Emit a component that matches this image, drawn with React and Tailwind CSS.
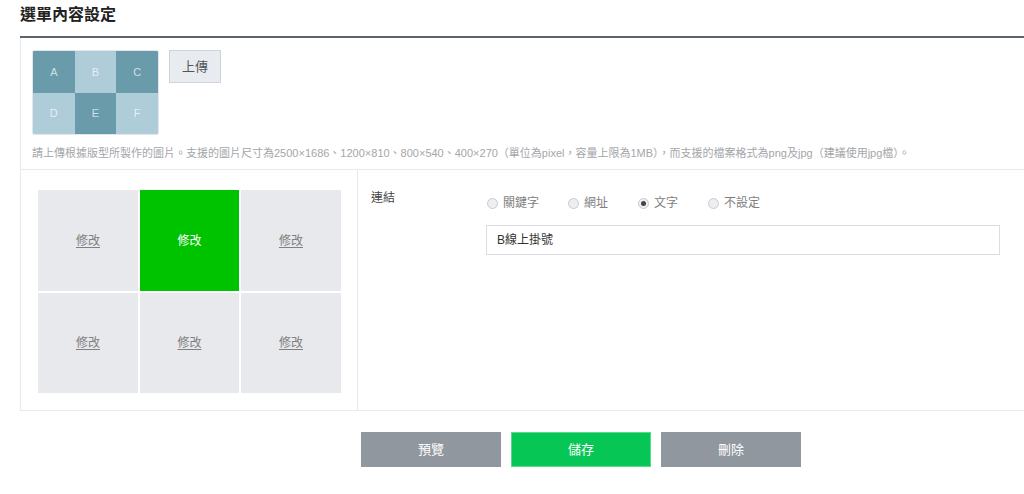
const FONT = { fontFamily: "'Liberation Sans', 'Noto Sans CJK TC', sans-serif" };

const thumbCells = [
  { l: "A", dark: true },
  { l: "B", dark: false },
  { l: "C", dark: true },
  { l: "D", dark: false },
  { l: "E", dark: true },
  { l: "F", dark: false },
];

function Radio({ label, checked }) {
  return (
    <label className="flex items-center gap-[5px] text-[12px] text-[#808080]">
      <span className="w-[11px] h-[11px] rounded-full border border-[#c9cbd0] bg-[#eceef1] flex items-center justify-center">
        {checked && <span className="w-[5px] h-[5px] rounded-full bg-[#444]" />}
      </span>
      {label}
    </label>
  );
}

export default function App() {
  return (
    <div className="w-[1024px] h-[494px] bg-white overflow-hidden" style={FONT}>
      <div className="h-[38px] ml-[20px] border-b-2 border-[#5b6270]">
        <h1 className="pt-[5px] text-[16px] font-bold text-[#222] leading-[20px]">選單內容設定</h1>
      </div>

      <div className="ml-[20px] border-l border-[#e6e8ee]">
        <div className="pt-[12px] pl-[11px] flex items-start gap-[10px]">
          <div className="w-[127px] h-[85px] rounded-[2px] border border-[#e3e6ea] grid grid-cols-3 overflow-hidden">
            {thumbCells.map((c) => (
              <div
                key={c.l}
                className={`flex items-center justify-center text-[11px] text-white/70 ${c.dark ? "bg-[#6a9bab]" : "bg-[#afcdd9]"}`}
              >
                {c.l}
              </div>
            ))}
          </div>
          <button className="w-[52px] h-[33px] bg-[#e8ebf0] border border-[#cfd4dc] text-[13px] text-[#555]">
            上傳
          </button>
        </div>
        <p className="pl-[11px] pt-[11px] pb-[9px] text-[11px] leading-[14px] text-[#a4a6aa] whitespace-nowrap">
          請上傳根據版型所製作的圖片。支援的圖片尺寸為2500×1686、1200×810、800×540、400×270（單位為pixel，容量上限為1MB），而支援的檔案格式為png及jpg（建議使用jpg檔）。
        </p>

        <div className="flex border-t border-b border-[#e8e9ef]">
          <div className="w-[337px] border-r border-[#e8e9ef] pt-[20px] pl-[17px] pb-[17px]">
            <div className="grid grid-cols-[100px_99px_100px] grid-rows-[101px_100px] gap-[2px] w-[303px]">
              {[0, 1, 2, 3, 4, 5].map((i) =>
                i === 1 ? (
                  <div key={i} className="bg-[#00c300] flex items-center justify-center text-[12px] text-white">
                    修改
                  </div>
                ) : (
                  <div key={i} className="bg-[#e8e9ed] flex items-center justify-center">
                    <span className="text-[12px] text-[#808080] underline underline-offset-2">修改</span>
                  </div>
                )
              )}
            </div>
          </div>

          <div className="flex-1 pl-[13px] pt-[20px]">
            <div className="flex">
              <div className="w-[116px] text-[12px] text-[#444] leading-[16px]">連結</div>
              <div className="flex-1">
                <div className="flex items-center h-[16px] mt-[5px]">
                  <div className="w-[81px]"><Radio label="關鍵字" /></div>
                  <div className="w-[70px]"><Radio label="網址" /></div>
                  <div className="w-[70px]"><Radio label="文字" checked /></div>
                  <Radio label="不設定" />
                </div>
                <div className="mt-[14px] ml-[-1px] w-[514px] h-[30px] border border-[#dcdce2] flex items-center pl-[10px] text-[12px] text-[#333]">
                  B線上掛號
                </div>
              </div>
            </div>
          </div>
        </div>
      </div>

      <div className="flex gap-[10px] ml-[361px] mt-[21px]">
        <button className="w-[140px] h-[35px] bg-[#90979f] text-white text-[13px]">預覽</button>
        <button className="w-[140px] h-[35px] bg-[#06c755] border border-[#5ad98d] text-white text-[13px]">儲存</button>
        <button className="w-[140px] h-[35px] bg-[#90979f] text-white text-[13px]">刪除</button>
      </div>
    </div>
  );
}
